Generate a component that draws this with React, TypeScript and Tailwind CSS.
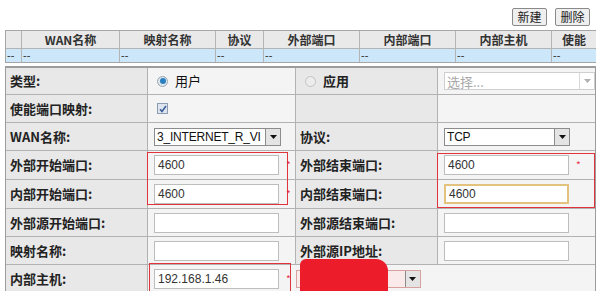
import type { ReactNode } from 'react'

const cjk = '"Noto Sans CJK SC", "Liberation Sans", sans-serif'
const latin = '"Liberation Sans", "Noto Sans CJK SC", sans-serif'

function Arrow({ disabled }: { disabled?: boolean }) {
  return (
    <span
      className={`flex h-full w-[15px] shrink-0 items-center justify-center border-l ${
        disabled ? 'border-[#d8d8d8] bg-white' : 'border-[#8c8c8c] bg-[#e4e4e4]'
      }`}
    >
      <svg width="7" height="4" viewBox="0 0 7 4">
        <path d="M0 0h7L3.5 4z" fill={disabled ? '#b0b0b0' : '#111'} />
      </svg>
    </span>
  )
}

function Select({ value, width, disabled }: { value: string; width: string; disabled?: boolean }) {
  return (
    <div
      className={`flex h-[18px] items-stretch border bg-white ${width} ${
        disabled ? 'border-[#cfcfcf]' : 'border-[#8c8c8c]'
      }`}
    >
      <span
        className={`flex flex-1 items-center overflow-hidden whitespace-nowrap pl-[2px] leading-none ${
          disabled ? 'text-[13px] text-[#a8a8a8]' : 'text-[12px] tracking-[-0.2px] text-[#111]'
        }`}
        style={{ fontFamily: disabled ? cjk : latin }}
      >
        {value}
      </span>
      <Arrow disabled={disabled} />
    </div>
  )
}

function Input({ value = '', focused }: { value?: string; focused?: boolean }) {
  return (
    <div
      className={`flex h-[20px] w-[125px] items-center bg-white pl-[3px] text-[12px] text-[#333] ${
        focused ? 'border-2 border-[#e3c27e]' : 'border border-[#bdbdbd]'
      }`}
      style={{ fontFamily: latin }}
    >
      {value}
    </div>
  )
}

function Star() {
  return <span className="ml-[7px] text-[10px] leading-none text-[#e8304a]">*</span>
}

function Label({ children }: { children?: ReactNode }) {
  return (
    <div
      className="flex items-center bg-[#e8e8e8] pl-[4px] text-[13px] font-bold text-[#222]"
      style={{ fontFamily: cjk }}
    >
      {children}
    </div>
  )
}

function Value({ children, className = '' }: { children?: ReactNode; className?: string }) {
  return <div className={`flex items-center bg-[#f4f4f4] pl-[6px] ${className}`}>{children}</div>
}

function Radio({ checked }: { checked?: boolean }) {
  return checked ? (
    <span className="flex h-[11px] w-[11px] items-center justify-center rounded-full border border-[#9aa6b4] bg-[#dfe6ee]">
      <span className="h-[6px] w-[6px] rounded-full bg-[#2a7fc0]" />
    </span>
  ) : (
    <span className="h-[11px] w-[11px] rounded-full border border-[#c4c4c4] bg-[#ececec]" />
  )
}

const headers = ['', 'WAN名称', '映射名称', '协议', '外部端口', '内部端口', '内部主机', '使能']

export default function App() {
  return (
    <div className="relative h-[291px] w-[600px] overflow-hidden bg-white" style={{ fontFamily: cjk }}>
      {/* toolbar */}
      <div className="flex h-[30px] justify-end gap-[8px] pr-[10px] pt-[8px]">
        {['新建', '删除'].map(b => (
          <button
            key={b}
            className="h-[18px] w-[35px] rounded-[2px] border border-[#8a8a8a] bg-[#efefef] text-[12px] leading-none text-[#222]"
          >
            {b}
          </button>
        ))}
      </div>

      {/* list header */}
      <div className="ml-[5px] grid w-[591px] grid-cols-[15px_97px_95px_47px_95px_95px_95px_44px] grid-rows-[17px_13px] gap-px border border-[#a6a6a6] bg-[#b4b4b4]">
        {headers.map((h, i) => (
          <div
            key={i}
            className="flex items-center justify-center bg-[#e9e9e9] text-[12px] font-bold text-[#333]"
          >
            {h}
          </div>
        ))}
        {headers.map((_, i) => (
          <div
            key={'d' + i}
            className="flex items-center bg-[#cbe7f9] pl-[1px] text-[11px] leading-none text-[#333]"
            style={{ fontFamily: latin }}
          >
            --
          </div>
        ))}
      </div>

      {/* form */}
      <div className="ml-[5px] mt-[3px] grid w-[591px] grid-cols-[141px_147px_141px_157px] grid-rows-[26px_27px_27px_28px_28px_27px_27px_28px] gap-px border border-t-2 border-[#9c9c9c] bg-[#b2b2b2]">
        <Label>类型:</Label>
        <Value className="pl-[9px]">
          <Radio checked />
          <span className="ml-[7px] text-[13px] text-[#111]">用户</span>
        </Value>
        <div className="flex items-center bg-[#e8e8e8] pl-[9px]">
          <Radio />
          <span className="ml-[7px] text-[13px] font-bold text-[#222]">应用</span>
        </div>
        <Value>
          <Select value="选择..." width="w-[152px]" disabled />
        </Value>

        <Label>使能端口映射:</Label>
        <Value className="pl-[9px]">
          <span className="flex h-[11px] w-[11px] items-center justify-center border border-[#8e9cb2] bg-[#dfe5ee]">
            <svg width="8" height="8" viewBox="0 0 8 8">
              <path d="M1 4.2l2 2.2L7 1" stroke="#3f5f9c" strokeWidth="1.6" fill="none" />
            </svg>
          </span>
        </Value>
        <Label />
        <Value />

        <Label>WAN名称:</Label>
        <Value className="pl-[4px]">
          <Select value="3_INTERNET_R_VI" width="w-[127px]" />
        </Value>
        <Label>协议:</Label>
        <Value className="pl-[5px]">
          <Select value="TCP" width="w-[126px]" />
        </Value>

        <Label>外部开始端口:</Label>
        <Value>
          <Input value="4600" />
          <Star />
        </Value>
        <Label>外部结束端口:</Label>
        <Value>
          <Input value="4600" />
          <Star />
        </Value>

        <Label>内部开始端口:</Label>
        <Value>
          <Input value="4600" />
          <Star />
        </Value>
        <Label>内部结束端口:</Label>
        <Value>
          <Input value="4600" focused />
        </Value>

        <Label>外部源开始端口:</Label>
        <Value>
          <Input />
        </Value>
        <Label>外部源结束端口:</Label>
        <Value>
          <Input />
        </Value>

        <Label>映射名称:</Label>
        <Value>
          <Input />
        </Value>
        <Label>外部源IP地址:</Label>
        <Value>
          <Input />
        </Value>

        <Label>内部主机:</Label>
        <Value className="col-span-3">
          <Input value="192.168.1.46" />
          <Star />
          <div className="ml-[5px] flex h-[18px] w-[125px] items-stretch border border-[#d9a0a0] bg-[#fbeaea]">
            <span className="flex flex-1 items-center pl-[3px] text-[12px] text-[#c98080]" style={{ fontFamily: latin }}>
              a
            </span>
            <Arrow />
          </div>
        </Value>
      </div>

      {/* annotation boxes */}
      <div className="absolute left-[147px] top-[152px] h-[53px] w-[141px] border border-[#e0343c]" />
      <div className="absolute left-[437px] top-[153px] h-[55px] w-[158px] border border-[#e0343c]" />
      <div className="absolute left-[149px] top-[263px] h-[40px] w-[142px] border border-[#e0343c]" />
      {/* redaction */}
      <div className="absolute left-[300px] top-[259px] h-[40px] w-[88px] rounded-tl-[6px] rounded-tr-[12px] bg-[#ec1c2a]" />
    </div>
  )
}
